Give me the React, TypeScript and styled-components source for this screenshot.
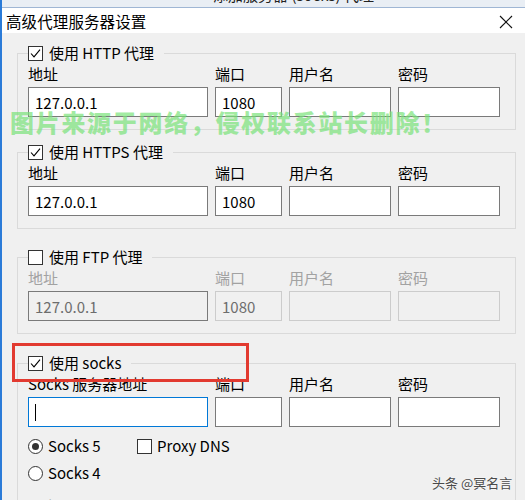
import React from "react";
import styled, { createGlobalStyle } from "styled-components";

const GlobalStyle = createGlobalStyle`
  html, body {
    margin: 0;
    padding: 0;
    width: 525px;
    height: 500px;
    overflow: hidden;
    background: #f0f0f0;
  }
  * { box-sizing: border-box; }
`;

const Frame = styled.div`
  position: relative;
  width: 525px;
  height: 500px;
  overflow: hidden;
  border-left: 2px solid #2b7bd8;
  font-family: "Noto Sans CJK SC", "Noto Sans", sans-serif;
  font-size: 15px;
  color: #000;
  background: #f0f0f0;
`;

const BackStrip = styled.div`
  height: 8px;
  overflow: hidden;
  background: #e9eef4;
  border-bottom: 1px solid #9fb6d4;
  display: flex;
  justify-content: center;
`;

const BackText = styled.span`
  margin-top: -14px;
  margin-left: 60px;
  font-size: 15px;
  line-height: 18px;
  color: #222;
  white-space: nowrap;
`;

const TitleBar = styled.div`
  height: 25px;
  background: #ffffff;
  display: flex;
  align-items: center;
  justify-content: space-between;
  padding: 0 12px 0 4px;
`;

const Title = styled.span`
  font-size: 15.5px;
  line-height: 20px;
  letter-spacing: 0.1px;
`;

const CloseIcon = styled.svg`
  width: 14px;
  height: 14px;
  margin-top: 2px;
`;

const Body = styled.div`
  padding: 10px 9px 0 15px;
  background: #f0f0f0;
`;

const GroupBox = styled.fieldset<{ $top: number }>`
  margin: ${(p) => p.$top}px 0 0 0;
  border: 1px solid #dadada;
  padding: 1px 14px 12px 10px;
  min-width: 0;
`;

const Legend = styled.legend`
  padding: 0 10px 0 0;
  margin: 0;
  height: 20px;
  display: flex;
  align-items: center;
  gap: 6px;
  line-height: 20px;
  white-space: nowrap;
`;

const FieldGrid = styled.div`
  display: grid;
  grid-template-columns: 180px 67px 102px 102px;
  column-gap: 7px;
  row-gap: 3px;
`;

const FieldLabel = styled.span<{ $disabled?: boolean }>`
  line-height: 20px;
  white-space: nowrap;
  color: ${(p) => (p.$disabled ? "#a2a2a2" : "#000")};
`;

const TextBox = styled.div<{ $disabled?: boolean; $dim?: boolean; $focus?: boolean }>`
  height: 30px;
  display: flex;
  align-items: center;
  padding: 0 6px;
  background: ${(p) => (p.$disabled ? "#f0f0f0" : "#ffffff")};
  border: 1px solid
    ${(p) => (p.$focus ? "#0078d7" : p.$dim ? "#cccccc" : "#7a7a7a")};
  color: ${(p) => (p.$disabled ? "#6d6d6d" : "#000")};
  font-size: 15px;
  white-space: nowrap;
`;

const Caret = styled.span`
  width: 1px;
  height: 17px;
  background: #000;
`;

const OptionRow = styled.div<{ $top: number }>`
  display: flex;
  align-items: center;
  height: 18px;
  margin-top: ${(p) => p.$top}px;
`;

const Option = styled.span<{ $width?: number }>`
  display: inline-flex;
  align-items: center;
  gap: 5px;
  width: ${(p) => (p.$width ? `${p.$width}px` : "auto")};
  line-height: 18px;
  white-space: nowrap;
`;

const BoxMark = styled.span`
  width: 15px;
  height: 15px;
  border: 1px solid #333;
  background: #fff;
  display: inline-flex;
  align-items: center;
  justify-content: center;
  flex: none;
`;

const RadioMark = styled.span`
  width: 15px;
  height: 15px;
  border-radius: 50%;
  border: 1px solid #333;
  background: #fff;
  display: inline-flex;
  align-items: center;
  justify-content: center;
  flex: none;
`;

const RadioDot = styled.span`
  width: 7px;
  height: 7px;
  border-radius: 50%;
  background: #333;
`;

const Note = styled.div`
  margin-top: 13px;
  line-height: 20px;
`;

const Watermark = styled.div`
  position: absolute;
  left: 8px;
  top: 107px;
  font-size: 24px;
  font-weight: 900;
  line-height: 30px;
  letter-spacing: 1.7px;
  color: rgba(120, 226, 120, 0.7);
  white-space: nowrap;
  pointer-events: none;
`;

const Highlight = styled.div`
  position: absolute;
  left: 10px;
  top: 343px;
  width: 237px;
  height: 39px;
  border: 3px solid #e23a30;
  pointer-events: none;
`;

const Credit = styled.div`
  position: absolute;
  left: 430px;
  top: 474px;
  font-size: 13px;
  line-height: 18px;
  color: #4a4a4a;
  text-shadow: 0 0 2px #fff;
  white-space: nowrap;
`;

const Check = ({ checked }: { checked: boolean }) => (
  <BoxMark>
    {checked && (
      <svg width="13" height="13" viewBox="0 0 13 13">
        <polyline points="2,6.5 5,9.8 11,2.6" fill="none" stroke="#000" strokeWidth="1.1" />
      </svg>
    )}
  </BoxMark>
);

const Radio = ({ checked }: { checked: boolean }) => (
  <RadioMark>{checked && <RadioDot />}</RadioMark>
);

type GroupProps = {
  top: number;
  checked: boolean;
  title: string;
  disabled?: boolean;
  address: string;
  addrLabel?: string;
  port: string;
  focus?: boolean;
  children?: React.ReactNode;
};

const ProxyGroup = ({ top, checked, title, disabled, address, addrLabel = "地址", port, focus, children }: GroupProps) => (
  <GroupBox $top={top}>
    <Legend>
      <Check checked={checked} />
      <span>{title}</span>
    </Legend>
    <FieldGrid>
      <FieldLabel $disabled={disabled}>{addrLabel}</FieldLabel>
      <FieldLabel $disabled={disabled}>端口</FieldLabel>
      <FieldLabel $disabled={disabled}>用户名</FieldLabel>
      <FieldLabel $disabled={disabled}>密码</FieldLabel>
      <TextBox $disabled={disabled} $focus={focus}>
        {focus ? <Caret /> : address}
      </TextBox>
      <TextBox $disabled={disabled} $dim={disabled}>{port}</TextBox>
      <TextBox $disabled={disabled} $dim={disabled} />
      <TextBox $disabled={disabled} $dim={disabled} />
    </FieldGrid>
    {children}
  </GroupBox>
);

export default function App() {
  return (
    <>
      <GlobalStyle />
      <Frame>
        <BackStrip>
          <BackText>添加服务器 (socks) 代理</BackText>
        </BackStrip>
        <TitleBar>
          <Title>高级代理服务器设置</Title>
          <CloseIcon viewBox="0 0 14 14">
            <line x1="1" y1="1" x2="13" y2="13" stroke="#111" strokeWidth="1.1" />
            <line x1="13" y1="1" x2="1" y2="13" stroke="#111" strokeWidth="1.1" />
          </CloseIcon>
        </TitleBar>
        <Body>
          <ProxyGroup top={0} checked title="使用 HTTP 代理" address="127.0.0.1" port="1080" />
          <ProxyGroup top={12} checked title="使用 HTTPS 代理" address="127.0.0.1" port="1080" />
          <ProxyGroup top={18} checked={false} disabled title="使用 FTP 代理" address="127.0.0.1" port="1080" />
          <ProxyGroup top={19} checked title="使用 socks" addrLabel="Socks 服务器地址" address="" port="" focus>
            <OptionRow $top={10}>
              <Option $width={109}>
                <Radio checked />
                Socks 5
              </Option>
              <Option>
                <Check checked={false} />
                Proxy DNS
              </Option>
            </OptionRow>
            <OptionRow $top={9}>
              <Option>
                <Radio checked={false} />
                Socks 4
              </Option>
            </OptionRow>
            <Note>Note:</Note>
          </ProxyGroup>
        </Body>
        <Watermark>图片来源于网络，侵权联系站长删除！</Watermark>
        <Highlight />
        <Credit>头条 @冥名言</Credit>
      </Frame>
    </>
  );
}
